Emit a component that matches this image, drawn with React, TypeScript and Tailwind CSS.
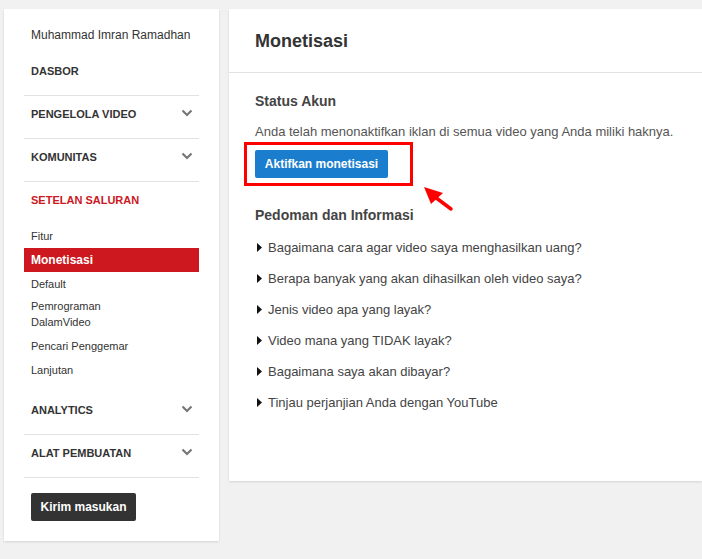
import React from 'react';

const font = { fontFamily: '"Liberation Sans", Arial, sans-serif' };

function Chevron() {
  return (
    <svg width="12" height="8" viewBox="0 0 12 8" className="mt-[2px] mr-[-1px]">
      <path d="M1.5 1.5 L6 6 L10.5 1.5" fill="none" stroke="#777" strokeWidth="2.2" />
    </svg>
  );
}

function Section({ label, chevron = true, red = false }: { label: string; chevron?: boolean; red?: boolean }) {
  return (
    <div className="h-[42px] pt-[11px] px-[7px] flex justify-between items-start">
      <span className={`text-[11px] leading-[14px] font-bold uppercase ${red ? 'text-[#cc181e]' : 'text-[#333]'}`}>
        {label}
      </span>
      {chevron && <Chevron />}
    </div>
  );
}

const Divider = () => <div className="h-px bg-[#e2e2e2]" />;

const subItems = ['Fitur', 'Monetisasi', 'Default', 'Pemrograman DalamVideo', 'Pencari Penggemar', 'Lanjutan'];

const questions = [
  'Bagaimana cara agar video saya menghasilkan uang?',
  'Berapa banyak yang akan dihasilkan oleh video saya?',
  'Jenis video apa yang layak?',
  'Video mana yang TIDAK layak?',
  'Bagaimana saya akan dibayar?',
  'Tinjau perjanjian Anda dengan YouTube',
];

function Sidebar() {
  return (
    <aside className="w-[215px] h-[532px] shrink-0 bg-white shadow-[0_1px_2px_rgba(0,0,0,0.12)] px-[20px] pt-[8px]">
      <div className="h-[36px] px-[7px] flex items-center text-[12px] text-[#333]">Muhammad Imran Ramadhan</div>
      <div className="h-[36px] px-[7px] flex items-center text-[11px] font-bold text-[#333]">DASBOR</div>
      <div className="h-[6px]" />
      <Divider />
      <Section label="Pengelola Video" />
      <Divider />
      <Section label="Komunitas" />
      <Divider />
      <Section label="Setelan Saluran" chevron={false} red />
      <div className="pb-[10px]">
        {subItems.map(item =>
          item === 'Monetisasi' ? (
            <div key={item} className="h-[24px] px-[7px] flex items-center bg-[#cc181e] text-white text-[12px] font-bold">
              {item}
            </div>
          ) : item === 'Pemrograman DalamVideo' ? (
            <div key={item} className="h-[38px] pt-[2px] px-[7px] text-[11px] leading-[16px] text-[#333]">
              Pemrograman
              <br />
              DalamVideo
            </div>
          ) : (
            <div key={item} className="h-[24px] px-[7px] flex items-center text-[11px] text-[#333]">
              {item}
            </div>
          )
        )}
      </div>
      <Section label="Analytics" />
      <Divider />
      <Section label="Alat Pembuatan" />
      <Divider />
      <div className="pt-[15px] px-[7px]">
        <button className="w-[105px] h-[28px] rounded-[2px] bg-[#333] text-white text-[12px] font-bold">
          Kirim masukan
        </button>
      </div>
    </aside>
  );
}

function Main() {
  return (
    <main className="flex-1 h-[472px] bg-white shadow-[0_1px_2px_rgba(0,0,0,0.12)]">
      <div className="h-[64px] pl-[26px] flex items-center border-b border-[#e2e2e2]">
        <h1 className="text-[18px] font-bold text-[#333] mt-[2px]">Monetisasi</h1>
      </div>
      <div className="pl-[26px] pt-[20px]">
        <h2 className="text-[14px] leading-[16px] font-bold text-[#444]">Status Akun</h2>
        <p className="mt-[15px] text-[13px] leading-[16px] text-[#555]">
          Anda telah menonaktifkan iklan di semua video yang Anda miliki haknya.
        </p>
        <div className="relative mt-[10px] w-[133px] h-[28px]">
          <button className="w-[133px] h-[28px] rounded-[2px] bg-[#1b7dcd] text-white text-[12px] font-bold">
            Aktifkan monetisasi
          </button>
          <div className="absolute left-[-11px] top-[-8px] w-[169px] h-[44px] border-[3px] border-[#f00]" />
          <svg className="absolute left-[169px] top-[37px]" width="30" height="26" viewBox="0 0 30 26">
            <polygon points="0,0 19,6 7,17" fill="#f00" />
            <line x1="11" y1="10" x2="27" y2="22" stroke="#f00" strokeWidth="3.5" strokeLinecap="round" />
          </svg>
        </div>
        <h2 className="mt-[29px] text-[14px] leading-[16px] font-bold text-[#444]">Pedoman dan Informasi</h2>
        <ul className="mt-[9px]">
          {questions.map(q => (
            <li key={q} className="h-[31px] flex items-center text-[13px] text-[#444]">
              <svg width="5" height="9" viewBox="0 0 5 9" className="ml-[2px] mr-[6px]">
                <polygon points="0,0 5,4.5 0,9" fill="#111" />
              </svg>
              {q}
            </li>
          ))}
        </ul>
      </div>
    </main>
  );
}

export default function App() {
  return (
    <div className="h-[559px] w-[702px] overflow-hidden bg-[#f1f1f1] pl-[4px] pt-[9px] flex items-start gap-[10px]" style={font}>
      <Sidebar />
      <Main />
    </div>
  );
}
